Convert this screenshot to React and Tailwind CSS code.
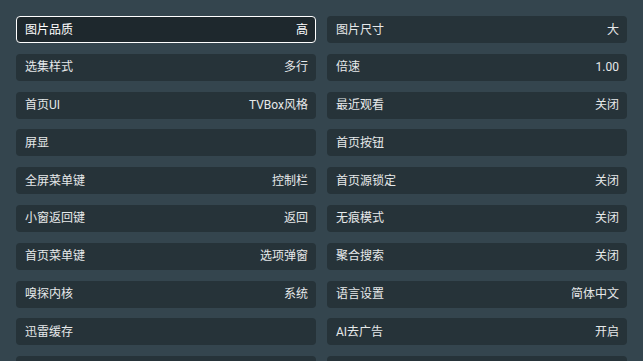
import React from "react";

const rows = [
  ["图片品质", "高", "图片尺寸", "大"],
  ["选集样式", "多行", "倍速", "1.00"],
  ["首页UI", "TVBox风格", "最近观看", "关闭"],
  ["屏显", "", "首页按钮", ""],
  ["全屏菜单键", "控制栏", "首页源锁定", "关闭"],
  ["小窗返回键", "返回", "无痕模式", "关闭"],
  ["首页菜单键", "选项弹窗", "聚合搜索", "关闭"],
  ["嗅探内核", "系统", "语言设置", "简体中文"],
  ["迅雷缓存", "", "AI去广告", "开启"],
  ["", "", "", ""],
];

const Item = ({ label, value, active }) => (
  <div
    className={
      active
        ? "h-[27px] flex items-center justify-between pl-[8px] pr-[7px] rounded-[4px] border border-white bg-[#1e282d] text-white"
        : "h-[27px] flex items-center justify-between pl-[9px] pr-[8px] rounded-[4px] bg-[#263339] text-[#e6e9ea]"
    }
  >
    <span>{label}</span>
    <span>{value}</span>
  </div>
);

const App = () => {
  return (
    <div
      className="min-h-screen bg-[#34454e] px-[16px] pt-[16px] text-[12px] leading-none"
      style={{ fontFamily: "Roboto, 'Noto Sans CJK SC', sans-serif" }}
    >
      <div className="grid grid-cols-2 gap-x-[11px] gap-y-[10.8px]">
        {rows.map((r, i) => (
          <React.Fragment key={i}>
            <Item label={r[0]} value={r[1]} active={i === 0} />
            <Item label={r[2]} value={r[3]} />
          </React.Fragment>
        ))}
      </div>
    </div>
  );
};

export default App;
